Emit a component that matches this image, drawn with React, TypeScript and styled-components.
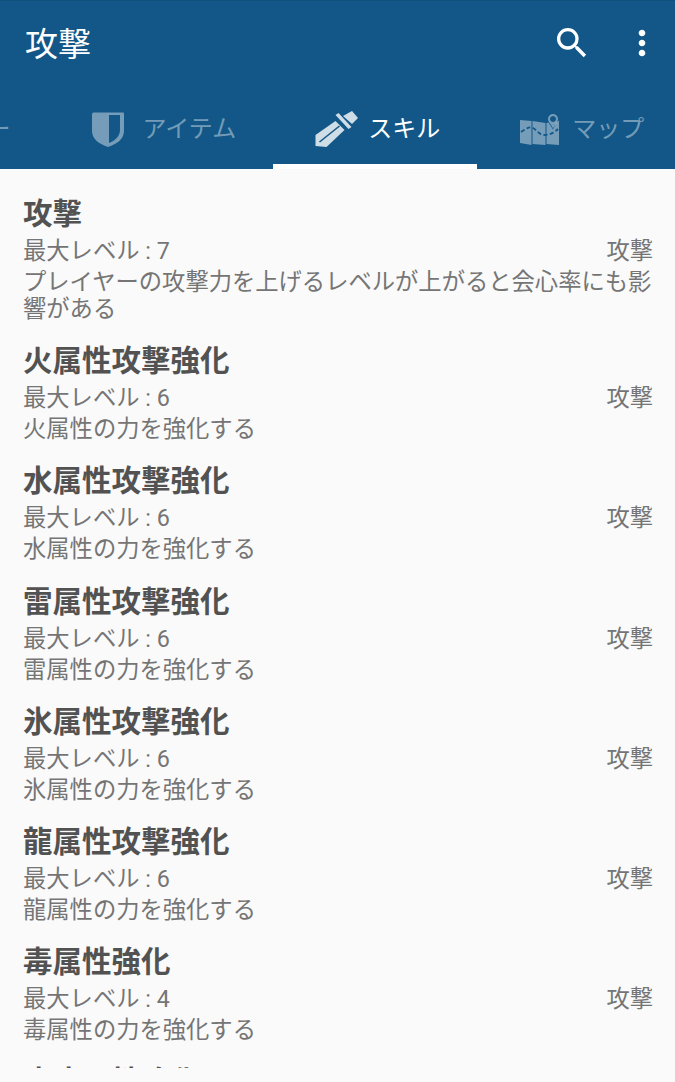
import React from 'react'
import styled, { createGlobalStyle } from 'styled-components'

const GlobalStyle = createGlobalStyle`
  html, body {
    margin: 0;
    padding: 0;
    height: 100%;
    background: #fafafa;
    font-family: "Noto Sans CJK JP", "Noto Sans", sans-serif;
  }
`

const Page = styled.div`
  width: 675px;
  height: 1082px;
  overflow: hidden;
  background: #fafafa;
`

const AppBar = styled.header`
  height: 169px;
  background: #125787;
  border-top: 1px solid #0f4f7c;
  box-sizing: border-box;
  overflow: hidden;
`

const Toolbar = styled.div`
  box-sizing: border-box;
  height: 87px;
  display: flex;
  align-items: center;
  padding: 0 13px 3px 25px;
`

const Title = styled.h1`
  flex: 1;
  margin: 0 0 2px;
  font-size: 33px;
  font-weight: 400;
  line-height: 1;
  color: #fff;
`

const ToolButton = styled.button`
  width: 40px;
  height: 48px;
  margin-left: 30px;
  padding: 0;
  border: 0;
  background: none;
  display: flex;
  align-items: center;
  justify-content: center;
`

/* scrolled sideways, the first tab is mostly off screen */
const TabStrip = styled.nav`
  height: 81px;
  display: flex;
  margin-left: -204px;
`

const Tab = styled.div<{ $active?: boolean }>`
  flex: none;
  box-sizing: border-box;
  display: flex;
  align-items: center;
  gap: 10px;
  padding: 1px 37px 0;
  border-bottom: 5px solid ${p => (p.$active ? '#fff' : 'transparent')};
  color: ${p => (p.$active ? '#fff' : 'rgba(255,255,255,0.42)')};
`

const TabLabel = styled.span`
  font-size: 24px;
  line-height: 1;
  white-space: nowrap;
`

const TabIcon = styled.svg<{ $active?: boolean }>`
  display: block;
  flex: none;
  width: 48px;
  height: 40px;
  margin-top: 5px;
  fill: ${p => (p.$active ? 'rgba(255,255,255,0.8)' : 'rgba(255,255,255,0.42)')};
`

const SkillList = styled.ul`
  list-style: none;
  margin: 0;
  padding: 21px 22px 0 23px;
  height: 878px;
  overflow: hidden;
`

const SkillRow = styled.li`
  margin-bottom: 16.2px;
`

const SkillName = styled.div`
  font-size: 29.5px;
  font-weight: 700;
  line-height: 43px;
  padding-bottom: 2px;
  color: #525252;
`

const MetaRow = styled.div`
  display: flex;
  justify-content: space-between;
  font-family: Roboto, "Noto Sans CJK JP", sans-serif;
  font-size: 23.3px;
  line-height: 32px;
  color: #757575;
`

const Description = styled.div`
  font-size: 23.3px;
  line-height: 27px;
  color: #757575;
`

const ShieldIcon = () => (
  <TabIcon viewBox="1 0 48 40">
    <path
      fillRule="evenodd"
      d="M9.500 3.500H39q1 0 1 1V22c0 8-7 13-16 16C15 35 8 30 8 22V5q0-1.500 1.500-1.500zM25 6v28c6-2 11-7 11-13V6z"
    />
  </TabIcon>
)

const DaggerIcon = () => (
  <TabIcon $active viewBox="0 0 48 40">
    <path d="M5.500 37V26l20-14 9 9-18 17z" />
    <path d="M25.500 6l3-2 13 14-3 2z" />
    <path d="M33 7l9-5 6 7-6 6z" />
    <path d="M9.500 33L29.500 17" fill="none" stroke="#125787" strokeWidth="1.6" />
  </TabIcon>
)

const MapIcon = () => (
  <TabIcon viewBox="-2 0 48 40">
    <path d="M4 11l11.500 1v24L4 34z" />
    <path d="M16.500 12L29.500 14v22l-13-1z" />
    <path d="M30.500 14l2-.5 4.500 7 3-7 3-2V36l-12.500-1z" />
    <path
      fillRule="evenodd"
      d="M37 5a5 5 0 0 1 5 5c0 3-3 5-5 9.500C35 15 32 13 32 10a5 5 0 0 1 5-5zM37 7a3 3 0 1 0 .01 0z"
    />
    <path
      d="M5 23c5-3 8-6 12-4s6 7 11 7 10-2 14-6"
      fill="none"
      stroke="#125787"
      strokeWidth="1.8"
      strokeDasharray="4 2.500"
    />
  </TabIcon>
)

const skills = [
  { name: '攻撃', level: 7, text: 'プレイヤーの攻撃力を上げるレベルが上がると会心率にも影響がある' },
  { name: '火属性攻撃強化', level: 6, text: '火属性の力を強化する' },
  { name: '水属性攻撃強化', level: 6, text: '水属性の力を強化する' },
  { name: '雷属性攻撃強化', level: 6, text: '雷属性の力を強化する' },
  { name: '氷属性攻撃強化', level: 6, text: '氷属性の力を強化する' },
  { name: '龍属性攻撃強化', level: 6, text: '龍属性の力を強化する' },
  { name: '毒属性強化', level: 4, text: '毒属性の力を強化する' },
  { name: '麻痺属性強化', level: 3, text: '麻痺属性の力を強化する' },
]

export default function App() {
  return (
    <Page>
      <GlobalStyle />
      <AppBar>
        <Toolbar>
          <Title>攻撃</Title>
          <ToolButton aria-label="検索">
            <svg width="40" height="40" viewBox="0 0 24 24" fill="#fff">
              <path d="M15.500 14h-.79l-.28-.27A6.470 6.470 0 0 0 16 9.500 6.500 6.500 0 1 0 9.500 16c1.610 0 3.090-.59 4.230-1.570l.27.28v.79l5 4.990L20.490 19l-4.990-5zm-6 0C7.010 14 5 11.990 5 9.500S7.010 5 9.500 5 14 7.010 14 9.500 11.990 14 9.500 14z" />
            </svg>
          </ToolButton>
          <ToolButton aria-label="メニュー">
            <svg width="40" height="40" viewBox="0 0 24 24" fill="#fff">
              <path d="M12 8c1.100 0 2-.9 2-2s-.9-2-2-2-2 .9-2 2 .9 2 2 2zm0 2c-1.100 0-2 .9-2 2s.9 2 2 2 2-.9 2-2-.9-2-2-2zm0 6c-1.100 0-2 .9-2 2s.9 2 2 2 2-.9 2-2-.9-2-2-2z" />
            </svg>
          </ToolButton>
        </Toolbar>
        <TabStrip>
          <Tab>
            <TabIcon viewBox="0 0 48 40" />
            <TabLabel>モンスター</TabLabel>
          </Tab>
          <Tab>
            <ShieldIcon />
            <TabLabel>アイテム</TabLabel>
          </Tab>
          <Tab $active>
            <DaggerIcon />
            <TabLabel>スキル</TabLabel>
          </Tab>
          <Tab>
            <MapIcon />
            <TabLabel>マップ</TabLabel>
          </Tab>
        </TabStrip>
      </AppBar>
      <SkillList>
        {skills.map(skill => (
          <SkillRow key={skill.name}>
            <SkillName>{skill.name}</SkillName>
            <MetaRow>
              <span>最大レベル : {skill.level}</span>
              <span>攻撃</span>
            </MetaRow>
            <Description>{skill.text}</Description>
          </SkillRow>
        ))}
      </SkillList>
    </Page>
  )
}
